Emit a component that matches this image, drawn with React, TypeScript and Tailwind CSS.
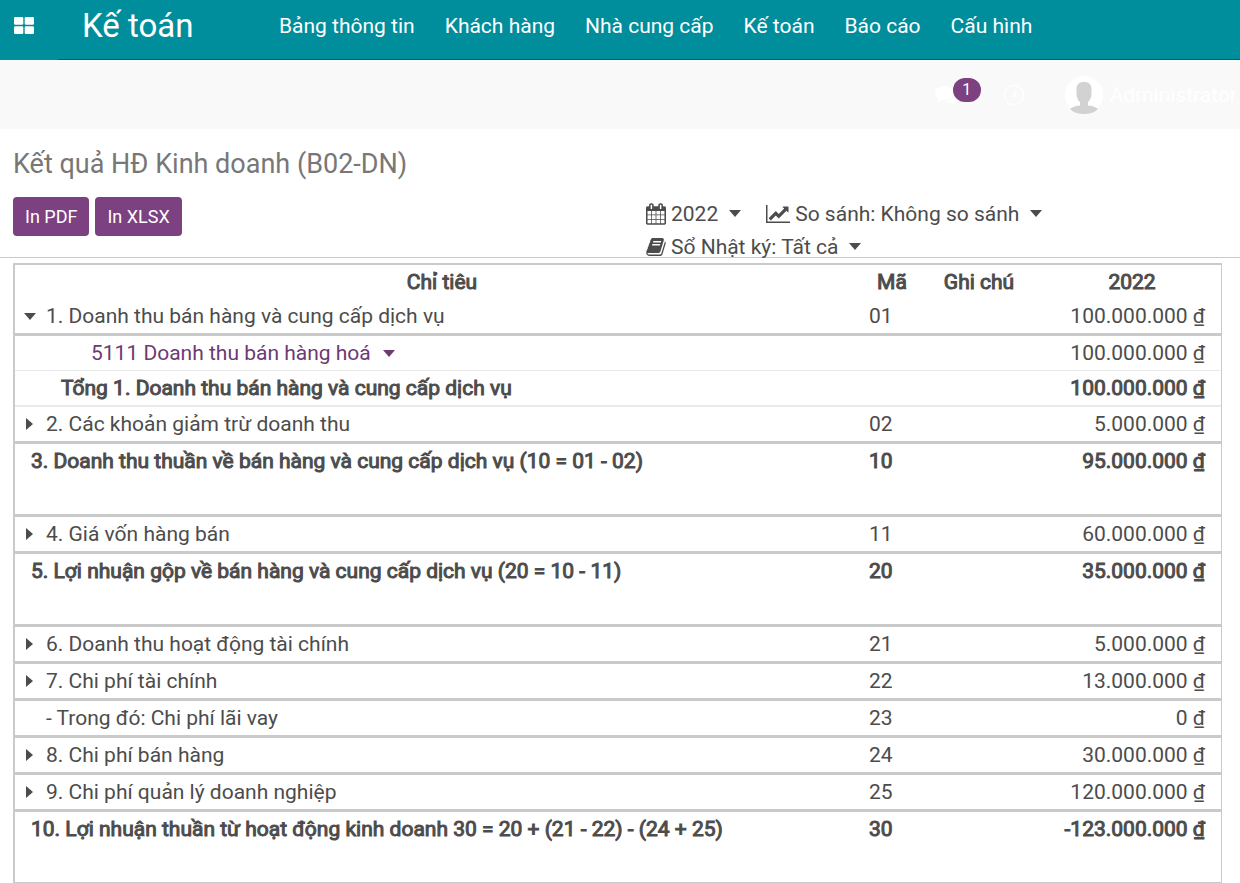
import type { ReactNode } from 'react';

type RowKind = 'line' | 'account' | 'subtotal' | 'total';

interface ReportRow {
  kind: RowKind;
  label: string;
  code?: string;
  amount: string;
  toggle?: 'open' | 'closed';
}

const MENU = ['Bảng thông tin', 'Khách hàng', 'Nhà cung cấp', 'Kế toán', 'Báo cáo', 'Cấu hình'];

const ROWS: ReportRow[] = [
  { kind: 'line', label: '1. Doanh thu bán hàng và cung cấp dịch vụ', code: '01', amount: '100.000.000 ₫', toggle: 'open' },
  { kind: 'account', label: '5111 Doanh thu bán hàng hoá', amount: '100.000.000 ₫' },
  { kind: 'subtotal', label: 'Tổng 1. Doanh thu bán hàng và cung cấp dịch vụ', amount: '100.000.000 ₫' },
  { kind: 'line', label: '2. Các khoản giảm trừ doanh thu', code: '02', amount: '5.000.000 ₫', toggle: 'closed' },
  { kind: 'total', label: '3. Doanh thu thuần về bán hàng và cung cấp dịch vụ (10 = 01 - 02)', code: '10', amount: '95.000.000 ₫' },
  { kind: 'line', label: '4. Giá vốn hàng bán', code: '11', amount: '60.000.000 ₫', toggle: 'closed' },
  { kind: 'total', label: '5. Lợi nhuận gộp về bán hàng và cung cấp dịch vụ (20 = 10 - 11)', code: '20', amount: '35.000.000 ₫' },
  { kind: 'line', label: '6. Doanh thu hoạt động tài chính', code: '21', amount: '5.000.000 ₫', toggle: 'closed' },
  { kind: 'line', label: '7. Chi phí tài chính', code: '22', amount: '13.000.000 ₫', toggle: 'closed' },
  { kind: 'line', label: '- Trong đó: Chi phí lãi vay', code: '23', amount: '0 ₫' },
  { kind: 'line', label: '8. Chi phí bán hàng', code: '24', amount: '30.000.000 ₫', toggle: 'closed' },
  { kind: 'line', label: '9. Chi phí quản lý doanh nghiệp', code: '25', amount: '120.000.000 ₫', toggle: 'closed' },
  { kind: 'total', label: '10. Lợi nhuận thuần từ hoạt động kinh doanh 30 = 20 + (21 - 22) - (24 + 25)', code: '30', amount: '-123.000.000 ₫' },
];

const ROW_STYLE: Record<RowKind, string> = {
  line: 'h-[37px] border-b-[3px] border-[#cacaca]',
  account: 'h-[35px] border-b border-[#eaeaea]',
  subtotal: 'h-9 border-b-2 border-[#eaeaea]',
  total: 'h-[73px] border-b-[3px] border-[#cacaca]',
};

const LABEL_PAD: Record<RowKind, string> = {
  line: 'pl-2',
  account: 'pl-[76px]',
  subtotal: 'pl-[46px]',
  total: 'pl-4',
};

const HEAVY = '[-webkit-text-stroke:1px_currentColor]';

function CaretDown() {
  return (
    <svg viewBox="0 0 12 7" className="h-[7px] w-3 shrink-0 fill-current" aria-hidden="true">
      <path d="M0 0h12L6 7z" />
    </svg>
  );
}

function CaretRight() {
  return (
    <svg viewBox="0 0 7 12" className="h-3 w-[7px] shrink-0 fill-current" aria-hidden="true">
      <path d="M0 0v12l7-6z" />
    </svg>
  );
}

function AppsIcon() {
  return (
    <svg viewBox="0 0 20 17" className="h-[17px] w-5 fill-white" aria-hidden="true">
      <rect width="9.3" height="7.8" rx="1.3" />
      <rect x="10.7" width="9.3" height="7.8" rx="1.3" />
      <rect y="9.2" width="9.3" height="7.8" rx="1.3" />
      <rect x="10.7" y="9.2" width="9.3" height="7.8" rx="1.3" />
    </svg>
  );
}

function CalendarIcon() {
  return (
    <svg viewBox="64 0 1664 1792" className="h-[22px] w-5 shrink-0 fill-current" aria-hidden="true">
      <path d="M192 1664h288v-288h-288v288zm352 0h320v-288h-320v288zm-352-352h288v-320h-288v320zm352 0h320v-320h-320v320zm-352-384h288v-288h-288v288zm736 736h320v-288h-320v288zm-384-736h320v-288h-320v288zm768 736h288v-288h-288v288zm-384-352h320v-320h-320v320zm-352-864v-288q0-13-9.5-22.5t-22.5-9.5h-64q-13 0-22.5 9.5t-9.5 22.5v288q0 13 9.5 22.5t22.5 9.5h64q13 0 22.5-9.5t9.5-22.5zm736 864h288v-320h-288v320zm-384-384h320v-288h-320v288zm384 0h288v-288h-288v288zm32-480v-288q0-13-9.5-22.5t-22.5-9.5h-64q-13 0-22.5 9.5t-9.5 22.5v288q0 13 9.5 22.5t22.5 9.5h64q13 0 22.5-9.5t9.5-22.5zm384-64v1280q0 52-38 90t-90 38h-1408q-52 0-90-38t-38-90v-1280q0-52 38-90t90-38h128v-96q0-66 47-113t113-47h64q66 0 113 47t47 113v96h384v-96q0-66 47-113t113-47h64q66 0 113 47t47 113v96h128q52 0 90 38t38 90z" />
    </svg>
  );
}

function ChartIcon() {
  return (
    <svg viewBox="0 128 2048 1536" className="h-[18px] w-6 shrink-0 fill-current" aria-hidden="true">
      <path d="M2048 1536v128h-2048v-1536h128v1408h1920zM1920 288v435q0 21-19.5 29.5t-35.5-7.5l-121-121-633 633q-10 10-23 10t-23-10l-233-233-416 416-192-192 585-585q10-10 23-10t23 10l233 233 464-464-121-121q-16-16-7.5-35.5t29.5-19.5h435q14 0 23 9t9 23z" />
    </svg>
  );
}

function BookIcon() {
  return (
    <svg viewBox="64 128 1664 1536" className="h-[18px] w-5 shrink-0 fill-current" aria-hidden="true">
      <path d="M1703 478q40 57 18 129l-275 906q-19 64-76.5 107.5t-122.5 43.5h-923q-77 0-148.5-53.5t-99.5-131.5q-24-67-2-127 0-4 3-27t4-37q1-8-3-21.5t-3-19.5q2-11 8-21t16.5-23.5 16.5-23.5q23-38 45-91.5t30-91.5q3-10 .5-30t-.5-28q3-11 17-28t17-23q21-36 42-92t25-90q1-9-2.5-32t.5-28q4-13 22-30.5t22-22.5q19-26 42.5-84.5t27.5-96.5q1-8-3-25.5t-2-26.5q2-8 9-18t18-23 17-21q8-12 16.5-30.5t15-35 16-36 19.5-32 26.5-23.5 36-11.5 47.5 5.5l-1 3q38-9 51-9h761q74 0 114 56t18 130l-274 906q-36 119-71.5 153.5t-128.5 34.5h-869q-27 0-38 15-11 16-1 43 24 70 144 70h923q29 0 56-15.5t35-41.5l300-987q7-22 5-57 38 15 59 43zm-1064 2q-4 13 2 22.5t20 9.5h608q13 0 25.5-9.5t16.5-22.5l21-64q4-13-2-22.5t-20-9.5h-608q-13 0-25.5 9.5t-16.5 22.5zm-83 256q-4 13 2 22.5t20 9.5h608q13 0 25.5-9.5t16.5-22.5l21-64q4-13-2-22.5t-20-9.5h-608q-13 0-25.5 9.5t-16.5 22.5z" />
    </svg>
  );
}

function ChatIcon() {
  return (
    <svg viewBox="0 0 25 20" className="h-5 w-[25px] fill-white" aria-hidden="true">
      <path d="M9.500 1C4.300 1 0 4.300 0 8.300c0 2.300 1.400 4.300 3.500 5.600-.3 1.200-1 2.200-1.900 3 2.200-.2 4-1 5.400-2.200.8.100 1.600.2 2.500.2 5.300 0 9.500-3 9.500-6.700S14.800 1 9.500 1z" />
      <path d="M21 7c0 5-5 9-11.500 9.200 1.700 1.200 4 1.800 6.500 1.800 1.400 1.200 3.200 1.800 5.300 2-.8-.8-1.500-1.700-1.800-2.800 2.800-1.200 4.500-3 4.500-5.200C24 10 23 8.200 21 7z" />
    </svg>
  );
}

function ClockIcon() {
  return (
    <svg viewBox="0 0 22 22" className="size-[22px] fill-none stroke-[#fdfdfd]" strokeWidth="2" aria-hidden="true">
      <circle cx="11" cy="11" r="9.500" />
      <path d="M12 6v6H8" />
    </svg>
  );
}

function Avatar() {
  return (
    <svg viewBox="0 0 38 38" className="size-[38px] shrink-0" aria-hidden="true">
      <circle cx="19" cy="19" r="19" fill="#fff" />
      <path fill="#d2d2d2" d="M19 6c5 0 7.500 2.700 7.500 7v4c0 4-1.300 7.200-3.500 9v3.500c3.700.3 7.300 1.200 10 3.500-3 3.200-8 5-14 5s-11-1.800-14-5c2.700-2.300 6.300-3.200 10-3.500V26c-2.200-1.800-3.500-5-3.500-9v-4C11.500 8.700 14 6 19 6z" />
    </svg>
  );
}

function FilterButton({ icon, children }: { icon: ReactNode; children: ReactNode }) {
  return (
    <button type="button" className="flex h-[33px] items-center gap-[5px] whitespace-nowrap">
      {icon}
      <span className="mr-1.5">{children}</span>
      <CaretDown />
    </button>
  );
}

function RowLabel({ row }: { row: ReportRow }) {
  if (row.kind === 'account') {
    return (
      <button type="button" className="flex items-center gap-3 text-[#6d3a72]">
        {row.label}
        <CaretDown />
      </button>
    );
  }
  if (row.kind === 'line') {
    return (
      <div className="flex items-center gap-2.5">
        <span className="flex w-[13px] justify-center">
          {row.toggle && (
            <button type="button" aria-label={row.label} aria-expanded={row.toggle === 'open'}>
              {row.toggle === 'open' ? <CaretDown /> : <CaretRight />}
            </button>
          )}
        </span>
        {row.label}
      </div>
    );
  }
  return <>{row.label}</>;
}

export default function App() {
  return (
    <div className="min-h-screen overflow-x-hidden bg-white font-[Roboto,sans-serif] text-[21px] leading-[34px] text-[#4c4c4c]">
      <header className="flex h-[60px] bg-[#008e9c] text-white">
        <button type="button" aria-label="Apps" className="flex w-[58px] items-center pb-2.5 pl-3.5">
          <AppsIcon />
        </button>
        <div className="flex flex-1 items-center border-b border-[#0b5f68] pb-[7px] pl-6">
          <a href="#home" className="w-[197px] text-[33px] leading-10">Kế toán</a>
          <nav className="flex gap-[30px] whitespace-nowrap">
            {MENU.map((item) => (
              <a key={item} href="#menu">{item}</a>
            ))}
          </nav>
        </div>
      </header>

      <div className="flex h-[69px] items-center justify-end bg-[#f9f9f9] pr-[3px] text-white">
        <button type="button" aria-label="1" className="relative mr-[43px]">
          <ChatIcon />
          <span className="absolute -top-[7px] left-[18px] flex h-6 w-7 items-center justify-center rounded-full bg-[#7c4180] text-base">1</span>
        </button>
        <button type="button" aria-label="Clock" className="mr-10">
          <ClockIcon />
        </button>
        <button type="button" className="flex items-center gap-[7px]">
          <Avatar />
          Administrator
        </button>
      </div>

      <section className="flex h-[129px] border-b border-[#cacaca] pl-[13px]">
        <div className="flex-1 pt-[18px]">
          <h1 className="text-[27px] text-[#777777]">Kết quả HĐ Kinh doanh (B02-DN)</h1>
          <div className="mt-4 flex gap-1.5 text-lg text-white">
            <button type="button" className="h-[39px] rounded bg-[#7c4180] px-3">In PDF</button>
            <button type="button" className="h-[39px] rounded bg-[#7c4180] px-3">In XLSX</button>
          </div>
        </div>
        <div className="flex w-[594px] flex-wrap content-start gap-x-[25px] pt-[68px]">
          <FilterButton icon={<CalendarIcon />}>2022</FilterButton>
          <FilterButton icon={<ChartIcon />}>So sánh: Không so sánh</FilterButton>
          <FilterButton icon={<BookIcon />}>Sổ Nhật ký: Tất cả</FilterButton>
        </div>
      </section>

      <main className="pl-[13px] pr-[18px] pt-[5px]">
        <table className="w-full table-fixed border-separate border-spacing-0 border-l-2 border-r border-t-2 border-[#cacaca]">
          <colgroup>
            <col />
            <col className="w-[46px]" />
            <col className="w-[128px]" />
            <col className="w-[178px]" />
          </colgroup>
          <thead>
            <tr className={HEAVY}>
              <th className="h-[34px] p-0 font-normal">Chỉ tiêu</th>
              <th className="p-0 font-normal">Mã</th>
              <th className="p-0 font-normal">Ghi chú</th>
              <th className="p-0 font-normal">2022</th>
            </tr>
          </thead>
          <tbody>
            {ROWS.map((row) => {
              const heavy = row.kind === 'subtotal' || row.kind === 'total' ? HEAVY : '';
              return (
                <tr key={row.label} className={heavy}>
                  <td className={`p-0 align-top whitespace-nowrap ${ROW_STYLE[row.kind]} ${LABEL_PAD[row.kind]}`}>
                    <RowLabel row={row} />
                  </td>
                  <td className={`p-0 align-top ${ROW_STYLE[row.kind]}`}>{row.code}</td>
                  <td className={`p-0 align-top ${ROW_STYLE[row.kind]}`} />
                  <td className={`p-0 pr-4 text-right align-top whitespace-nowrap ${ROW_STYLE[row.kind]}`}>{row.amount}</td>
                </tr>
              );
            })}
          </tbody>
        </table>
      </main>
    </div>
  );
}
